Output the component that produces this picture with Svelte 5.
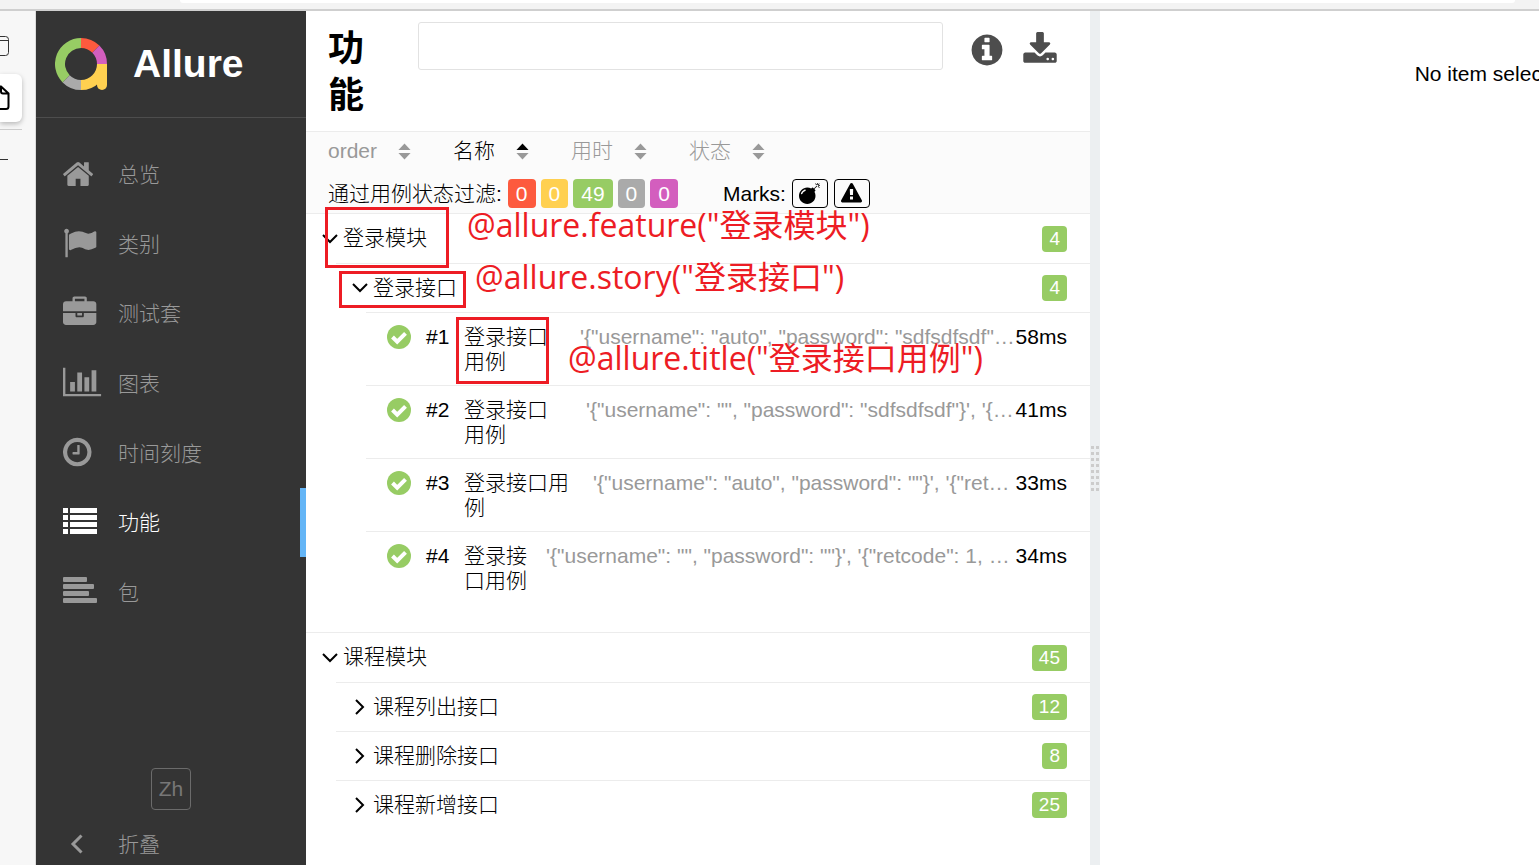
<script>
  const navItems = [
    { id: "overview", label: "总览" },
    { id: "categories", label: "类别" },
    { id: "suites", label: "测试套" },
    { id: "graph", label: "图表" },
    { id: "timeline", label: "时间刻度" },
    { id: "behaviors", label: "功能" },
    { id: "packages", label: "包" },
  ];

  const sorters = [
    { id: "order", label: "order" },
    { id: "name", label: "名称" },
    { id: "duration", label: "用时" },
    { id: "status", label: "状态" },
  ];

  const statuses = [
    { id: "failed", count: 0 },
    { id: "broken", count: 0 },
    { id: "passed", count: 49 },
    { id: "skipped", count: 0 },
    { id: "unknown", count: 0 },
  ];

  const tree = [
    {
      name: "登录模块",
      count: 4,
      stories: [
        {
          name: "登录接口",
          count: 4,
          cases: [
            { order: 1, nameWidth: 98, params: `'{"username": "auto", "password": "sdfsdfsdf"}', '{"retcode": 1}'`, time: "58ms" },
            { order: 2, nameWidth: 104, params: `'{"username": "", "password": "sdfsdfsdf"}', '{"retcode": 1}'`, time: "41ms" },
            { order: 3, nameWidth: 111, params: `'{"username": "auto", "password": ""}', '{"retcode": 1}'`, time: "33ms" },
            { order: 4, nameWidth: 64, params: `'{"username": "", "password": ""}', '{"retcode": 1, "reason": ""}'`, time: "34ms" },
          ],
        },
      ],
    },
    {
      name: "课程模块",
      count: 45,
      stories: [
        { name: "课程列出接口", count: 12, cases: [] },
        { name: "课程删除接口", count: 8, cases: [] },
        { name: "课程新增接口", count: 25, cases: [] },
      ],
    },
  ];

  let activeTab = $state("behaviors");
  let activeSort = $state("name");
  let query = $state("");
</script>

{#snippet chevron(open)}
  <svg class="chevron" viewBox="0 0 16 16" aria-hidden="true">
    <path d={open ? "M1 4l7 7 7-7" : "M4 1l7 7-7 7"} />
  </svg>
{/snippet}

{#snippet navIcon(id)}
  <svg class="nav-icon" viewBox="0 0 40 36" aria-hidden="true">
    {#if id === "overview"}
      <path transform="translate(-1.6 .4) scale(.0186)" d="M1472 992v480q0 26-19 45t-45 19h-384v-384h-256v384h-384q-26 0-45-19t-19-45v-480q0-1 .5-3t.5-3l575-474 575 474q1 2 1 6zm223-69l-62 74q-8 9-21 11h-3q-13 0-21-7l-692-577-692 577q-12 8-24 7-13-2-21-11l-62-74q-8-10-7-23.5t11-21.5l719-599q32-26 76-26t76 26l244 204v-195q0-14 9-23t23-9h192q14 0 23 9t9 23v408l219 182q10 8 11 21.5t-7 23.5z" />
    {:else if id === "categories"}
      <path transform="translate(0 .4) scale(.0186)" d="M320 256q0 72-64 110v1266q0 13-9.5 22.5t-22.5 9.5h-64q-13 0-22.5-9.5t-9.5-22.5v-1266q-64-38-64-110 0-53 37.5-90.5t90.5-37.5 90.5 37.5 37.5 90.5zm1472 64v763q0 25-12.5 38.5t-39.5 27.5q-215 116-369 116-61 0-123.5-22t-108.5-48-115.5-48-142.5-22q-192 0-464 146-17 9-33 9-26 0-45-19t-19-45v-742q0-32 31-55 21-14 79-43 236-120 421-120 107 0 200 29t219 88q38 19 88 19 54 0 117.5-21t110-47 88-47 54.5-21q26 0 45 19t19 45z" />
    {:else if id === "suites"}
      <path transform="translate(0 .4) scale(.0186)" d="M640 256h512v-128h-512v128zm1152 640v480q0 66-47 113t-113 47h-1472q-66 0-113-47t-47-113v-480h672v160q0 26 19 45t45 19h320q26 0 45-19t19-45v-160h672zm-768 0v128h-256v-128h256zm768-480v384h-1792v-384q0-66 47-113t113-47h352v-160q0-40 28-68t68-28h576q40 0 68 28t28 68v160h352q66 0 113 47t47 113z" />
    {:else if id === "graph"}
      <path transform="translate(0 .4) scale(.0186)" d="M640 896v512h-256v-512h256zm384-512v1024h-256v-1024h256zm1024 1152v128h-2048v-1536h128v1408h1920zm-640-896v768h-256v-768h256zm384-384v1152h-256v-1152h256z" />
    {:else if id === "timeline"}
      <path transform="translate(-2.4 .4) scale(.0186)" d="M1024 544v448q0 14-9 23t-23 9h-320q-14 0-23-9t-9-23v-64q0-14 9-23t23-9h224v-352q0-14 9-23t23-9h64q14 0 23 9t9 23zm416 352q0-148-73-273t-198-198-273-73-273 73-198 198-73 273 73 273 198 198 273 73 273-73 198-198 73-273zm224 0q0 209-103 385.5t-279.5 279.5-385.5 103-385.5-103-279.5-279.5-103-385.5 103-385.5 279.5-279.5 385.5-103 385.5 103 279.5 279.5 103 385.5z" />
    {:else if id === "behaviors"}
      <path d="M0 3h5v5H0zM7 3h27v5H7zM0 10h5v5H0zM7 10h27v5H7zM0 17h5v5H0zM7 17h27v5H7zM0 24h5v5H0zM7 24h27v5H7z" />
    {:else}
      <rect x="0" y="3" width="24" height="5" rx="1" />
      <rect x="0" y="10" width="31" height="5" rx="1" />
      <rect x="0" y="17" width="26" height="5" rx="1" />
      <rect x="0" y="24" width="34" height="5" rx="1" />
    {/if}
  </svg>
{/snippet}

<div class="window">
  <div class="toolbar"><div class="address"></div></div>

  <div class="frame">
    <div class="tab-strip">
      <button class="tab" aria-label="Tabs">
        <svg viewBox="0 0 22 48" aria-hidden="true"><path d="M0 14.5h5.500q3 0 3 3v13q0 3-3 3H0M0 18.500h8" /></svg>
      </button>
      <button class="tab current" aria-label="Current page">
        <svg viewBox="0 0 22 48" aria-hidden="true"><path d="M0 12.500h1l7.500 7v13q0 2.500-2.500 2.500H0M1 12.500v5q0 2 2 2h5.500" /></svg>
      </button>
      <button class="tab" aria-label="New tab">
        <svg viewBox="0 0 22 48" aria-hidden="true"><path d="M0 29.500h8" /></svg>
      </button>
    </div>

    <aside class="side">
      <div class="brand">
        <svg class="logo" viewBox="0 0 52 52" aria-hidden="true">
          <g fill="none" stroke-width="10">
            <path stroke="#97cc64" d="M26 5A21 21 0 0 0 11.150 40.850" />
            <path stroke="#fd5a3e" d="M26 5A21 21 0 0 1 40.850 11.150" />
            <path stroke="#d35ebe" d="M40.850 11.150A21 21 0 0 1 47 26" />
            <path stroke="#ffd050" d="M47 26A21 21 0 0 1 26 47" />
            <path stroke="#aaa" d="M26 47A21 21 0 0 1 11.150 40.850" />
          </g>
          <path fill="#ffd050" d="M42 26h10v21a5 5 0 0 1-10 0z" />
        </svg>
        <span>Allure</span>
      </div>

      <nav class="nav">
        {#each navItems as item}
          <a href="#{item.id}" class:active={activeTab === item.id} onclick={() => (activeTab = item.id)}>
            {@render navIcon(item.id)}
            <span>{item.label}</span>
          </a>
        {/each}
      </nav>

      <div class="side-footer">
        <button class="language">Zh</button>
        <button class="collapse">
          <svg viewBox="0 0 28 20" aria-hidden="true"><path d="M18.500 1.500L10 10l8.500 8.500" /></svg>
          <span>折叠</span>
        </button>
      </div>
    </aside>

    <main class="content">
      <header class="pane-header">
        <h1>功能</h1>
        <input type="text" aria-label="Search" bind:value={query} />
        <button class="tool" aria-label="Info">
          <svg viewBox="0 0 1792 1792" aria-hidden="true"><path d="M1152 1376v-160q0-14-9-23t-23-9h-96v-512q0-14-9-23t-23-9h-320q-14 0-23 9t-9 23v160q0 14 9 23t23 9h96v320h-96q-14 0-23 9t-9 23v160q0 14 9 23t23 9h448q14 0 23-9t9-23zm-128-896v-160q0-14-9-23t-23-9h-192q-14 0-23 9t-9 23v160q0 14 9 23t23 9h192q14 0 23-9t9-23zm640 416q0 209-103 385.5t-279.5 279.5-385.5 103-385.5-103-279.5-279.5-103-385.5 103-385.5 279.5-279.5 385.5-103 385.5 103 279.5 279.5 103 385.5z" /></svg>
        </button>
        <button class="tool" aria-label="Download">
          <svg viewBox="0 0 1792 1792" aria-hidden="true"><path d="M1344 1344q0-26-19-45t-45-19-45 19-19 45 19 45 45 19 45-19 19-45zm256 0q0-26-19-45t-45-19-45 19-19 45 19 45 45 19 45-19 19-45zm128-224v320q0 40-28 68t-68 28h-1472q-40 0-68-28t-28-68v-320q0-40 28-68t68-28h465l135 136q58 56 136 56t136-56l136-136h464q40 0 68 28t28 68zm-325-569q17 41-14 70l-448 448q-18 19-45 19t-45-19l-448-448q-31-29-14-70 17-39 59-39h256v-448q0-26 19-45t45-19h256q26 0 45 19t19 45v448h256q42 0 59 39z" /></svg>
        </button>
      </header>

      <div class="controls">
        <div class="sorters">
          {#each sorters as sorter}
            <button class:active={activeSort === sorter.id} onclick={() => (activeSort = sorter.id)}>
              {sorter.label}
              <svg viewBox="0 0 14 18" aria-hidden="true">
                <path class="up" d="M0.500 7.500L7 .5l6.500 7z" />
                <path d="M.5 10.500h13L7 17.500z" />
              </svg>
            </button>
          {/each}
        </div>
        <div class="filters">
          <span>通过用例状态过滤:</span>
          <div class="statuses">
            {#each statuses as status}
              <button class="status {status.id}">{status.count}</button>
            {/each}
          </div>
          <div class="marks">
            <span>Marks:</span>
            <button class="mark" aria-label="Flaky">
              <svg viewBox="0 0 1792 1792" aria-hidden="true"><path d="M571 589q-10-25-34-35t-49 0q-108 44-191 127t-127 191q-10 25 0 49t35 34q13 5 24 5 42 0 60-40 34-84 98.500-148.500t148.500-98.500q25-11 35-35t0-49zm942-356l46 46-244 243 68 68q19 19 19 45.500t-19 45.500l-64 64q89 161 89 343 0 143-55.500 273.500t-150 225-225 150-273.500 55.500-273.500-55.500-225-150-150-225-55.500-273.500 55.500-273.500 150-225 225-150 273.500-55.500q182 0 343 89l64-64q19-19 45.500-19t45.500 19l68 68zm8-56q-10 10-22 10-13 0-23-10l-91-90q-9-10-9-23t9-23q10-9 23-9t23 9l90 91q10 9 10 22.500t-10 22.500zm230 230q-11 9-23 9t-23-9l-90-91q-10-9-10-22.500t10-22.500q9-10 22.500-10t22.500 10l91 90q9 10 9 23t-9 23zm41-183q0 14-9 23t-23 9h-96q-14 0-23-9t-9-23 9-23 23-9h96q14 0 23 9t9 23zm-192-192v96q0 14-9 23t-23 9-23-9-9-23v-96q0-14 9-23t23-9 23 9 9 23zm151 55l-91 90q-10 10-22 10-13 0-23-10-10-9-10-22.500t10-22.500l90-91q10-9 23-9t23 9q9 10 9 23t-9 23z" /></svg>
            </button>
            <button class="mark" aria-label="New failed">
              <svg viewBox="0 0 1792 1792" aria-hidden="true"><path d="M1024 1375v-190q0-14-9.500-23.500t-22.500-9.500h-192q-13 0-22.500 9.500t-9.500 23.500v190q0 14 9.500 23.500t22.500 9.500h192q13 0 22.500-9.500t9.500-23.500zm-2-374l18-459q0-12-10-19-13-11-24-11h-220q-11 0-24 11-10 7-10 21l17 457q0 10 10 16.500t24 6.500h185q14 0 23.500-6.500t10.500-16.500zm-14-934l768 1408q35 63-2 126-17 29-46.500 46t-63.500 17h-1536q-34 0-63.500-17t-46.500-46q-37-63-2-126l768-1408q17-31 47-49t65-18 65 18 47 49z" /></svg>
            </button>
          </div>
        </div>
      </div>

      <ul class="tree">
        {#each tree as feature}
          <li class="feature">
            <button class="group">
              {@render chevron(true)}
              <span class="group-name">{feature.name}</span>
              <span class="count">{feature.count}</span>
            </button>
            <ul>
              {#each feature.stories as story}
                <li class="story">
                  <button class="group">
                    {@render chevron(story.cases.length > 0)}
                    <span class="group-name">{story.name}</span>
                    <span class="count">{story.count}</span>
                  </button>
                  {#if story.cases.length}
                    <ul class="cases">
                      {#each story.cases as test}
                        <li>
                          <a class="case" href="#case-{test.order}">
                            <svg class="passed-icon" viewBox="0 0 24 24" aria-hidden="true">
                              <circle cx="12" cy="12" r="12" />
                              <path d="M5.500 12l4.700 4.700 8.300-8.300" />
                            </svg>
                            <span class="order">#{test.order}</span>
                            <span class="case-name" style="width: {test.nameWidth}px">登录接口用例</span>
                            <span class="params">{test.params}</span>
                            <span>{test.time}</span>
                          </a>
                        </li>
                      {/each}
                    </ul>
                  {/if}
                </li>
              {/each}
            </ul>
          </li>
        {/each}
      </ul>

      <div class="note-box feature-box"></div>
      <div class="note-box story-box"></div>
      <div class="note-box title-box"></div>
      <div class="note feature-note">@allure.feature("登录模块")</div>
      <div class="note story-note">@allure.story("登录接口")</div>
      <div class="note title-note">@allure.title("登录接口用例")</div>
    </main>

    <div class="gutter"><div class="grip"></div></div>

    <section class="detail">
      <p>No item selected</p>
    </section>
  </div>
</div>

<style>
  :global(body) {
    background: #f7f7f7;
  }
  .window {
    display: flex;
    flex-direction: column;
    height: 100vh;
    overflow: hidden;
    color: #000;
    font: 300 21px/25px "Liberation Sans", "Noto Sans CJK SC", sans-serif;
  }
  button {
    padding: 0;
    border: 0;
    background: none;
    color: inherit;
    font: inherit;
    cursor: pointer;
  }
  a {
    color: inherit;
    text-decoration: none;
  }
  ul {
    margin: 0;
    padding: 0;
    list-style: none;
  }
  svg {
    display: block;
    flex-shrink: 0;
    fill: currentColor;
  }

  /* Browser edge */
  .toolbar {
    flex: none;
    height: 9px;
    padding: 0 24px 0 180px;
    border-bottom: 2px solid #cfcfcf;
    background: #f3f3f3;
  }
  .address {
    height: 3px;
    border-radius: 0 0 5px 5px;
    background: #fff;
  }
  .frame {
    display: flex;
    flex: 1;
    min-height: 0;
  }
  .tab-strip {
    flex: none;
    width: 35px;
    padding-top: 11px;
    border-right: 1px solid #dcdcdc;
  }
  .tab {
    display: block;
    width: 22px;
    height: 48px;
  }
  .tab svg {
    width: 22px;
    height: 48px;
    fill: none;
    stroke: #333;
  }
  .tab.current {
    margin: 4px 0 7px;
    border-radius: 0 6px 6px 0;
    background: #fff;
    box-shadow: 0 2px 5px rgba(0, 0, 0, 0.25);
  }
  .tab.current svg {
    stroke: #000;
    stroke-width: 2;
  }
  .tab:last-child {
    border-top: 1px solid #ccc;
  }

  /* Side navigation */
  .side {
    display: flex;
    flex: none;
    flex-direction: column;
    width: 270px;
    background: #343434;
    color: #999;
  }
  .brand {
    display: flex;
    align-items: center;
    gap: 26px;
    height: 106px;
    padding-left: 19px;
    border-bottom: 1px solid #4d4d4d;
    color: #fff;
    font-size: 39px;
    font-weight: 700;
    line-height: 48px;
  }
  .logo {
    width: 52px;
    height: 52px;
  }
  .nav {
    display: grid;
    grid-auto-rows: 1fr;
    height: 487px;
    margin-top: 22px;
  }
  .nav a {
    display: flex;
    align-items: center;
    gap: 15px;
    padding-left: 27px;
    border-right: 6px solid transparent;
  }
  .nav a.active {
    border-color: #64b5f6;
    color: #fff;
  }
  .nav-icon {
    width: 40px;
    height: 36px;
  }
  .side-footer {
    display: flex;
    flex-direction: column;
    gap: 13px;
    margin-top: auto;
  }
  .language {
    align-self: center;
    width: 40px;
    height: 42px;
    padding-bottom: 2px;
    border: 1px solid #6b6b6b;
    border-radius: 4px;
    color: #777;
  }
  .collapse {
    display: flex;
    align-items: center;
    gap: 27px;
    height: 42px;
    padding-left: 27px;
  }
  .collapse svg {
    width: 28px;
    height: 20px;
    fill: none;
    stroke: currentColor;
    stroke-width: 3;
  }

  /* Behaviors pane */
  .content {
    position: relative;
    flex: 25 25 0;
    min-width: 0;
    background: #fff;
  }
  .pane-header {
    display: flex;
    align-items: flex-start;
    height: 120px;
    box-sizing: border-box;
    padding: 11px 32px 0 22px;
  }
  h1 {
    width: 36px;
    margin: 3px 54px 0 0;
    font-size: 36px;
    line-height: 47px;
    font-weight: 700;
  }
  .pane-header input {
    flex: 1;
    min-width: 0;
    height: 48px;
    box-sizing: border-box;
    margin-right: 9px;
    padding: 0 12px;
    border: 1px solid #e2e2e2;
    border-radius: 3px;
    font: inherit;
  }
  .tool {
    margin: 10px 0 0 17px;
    color: #4d4d4d;
  }
  .tool svg {
    width: 36px;
    height: 36px;
  }
  .controls {
    padding: 6px 22px 5px;
    border: 1px solid #ececec;
    border-width: 1px 0;
    background: #fbfbfb;
  }
  .sorters {
    display: flex;
    gap: 42px;
    margin-bottom: 16px;
  }
  .sorters button {
    display: flex;
    align-items: center;
    gap: 21px;
    color: #999;
  }
  .sorters svg {
    width: 13px;
    height: 17px;
    margin-top: 2px;
  }
  .sorters .active {
    color: #000;
  }
  .sorters .active path:not(.up) {
    fill: #999;
  }
  .filters,
  .marks {
    display: flex;
    align-items: center;
    gap: 6px;
    height: 29px;
  }
  .statuses {
    display: flex;
    gap: 5px;
  }
  .marks {
    margin-left: 39px;
  }
  .status,
  .count {
    border-radius: 4px;
    background: #97cc64;
    color: #fff;
  }
  .status {
    height: 29px;
    padding: 0 8px;
  }
  .failed { background: #fd5a3e; }
  .broken { background: #ffd050; }
  .skipped { background: #aaa; }
  .unknown { background: #d35ebe; }
  .mark {
    display: flex;
    align-items: center;
    justify-content: center;
    width: 36px;
    height: 29px;
    border: 1px solid #000;
    border-radius: 4px;
  }
  .mark svg {
    width: 21px;
    height: 21px;
  }

  /* Tree */
  .feature + .feature {
    border-top: 1px solid #ececec;
  }
  .group {
    display: flex;
    align-items: center;
    width: 100%;
    height: 49px;
    padding: 0 23px 0 16px;
    text-align: left;
  }
  .chevron {
    width: 16px;
    height: 16px;
    margin-right: 5px;
    fill: none;
    stroke: currentColor;
    stroke-width: 2;
  }
  .group-name {
    flex: 1;
    padding-bottom: 2px;
  }
  .count {
    padding: 0 7px;
    font-size: 19px;
    line-height: 26px;
  }
  .story {
    margin-left: 30px;
    border-top: 1px solid #ececec;
  }
  .story .group {
    height: 48px;
  }
  .cases {
    margin: 0 0 28px 30px;
  }
  .case {
    display: flex;
    align-items: flex-start;
    height: 61px;
    padding: 11px 23px 0 21px;
    border-top: 1px solid #ececec;
  }
  .passed-icon {
    width: 24px;
    height: 24px;
    margin: 1px 15px 0 0;
    fill: #97cc64;
  }
  .passed-icon path {
    fill: none;
    stroke: #fff;
    stroke-width: 4;
  }
  .order {
    flex: none;
    width: 38px;
  }
  .case-name {
    flex: none;
    margin-right: 18px;
  }
  .params {
    flex: 1;
    min-width: 0;
    overflow: hidden;
    color: #999;
    text-overflow: ellipsis;
    white-space: nowrap;
  }

  /* Annotations over the tree */
  .note-box {
    position: absolute;
    box-sizing: border-box;
    border: 3px solid #ed1c24;
    pointer-events: none;
  }
  .feature-box { left: 19px; top: 196px; width: 124px; height: 61px; }
  .story-box { left: 33px; top: 260px; width: 127px; height: 37px; }
  .title-box { left: 150px; top: 306px; width: 93px; height: 67px; }
  .note {
    position: absolute;
    color: #ed1c24;
    font: 400 32px/40px "Open Sans", "Noto Sans CJK SC", sans-serif;
    white-space: nowrap;
    pointer-events: none;
  }
  .feature-note { left: 161px; top: 194px; }
  .story-note { left: 169px; top: 246px; }
  .title-note { left: 262px; top: 327px; }

  .gutter {
    display: flex;
    flex: none;
    align-items: center;
    justify-content: center;
    width: 10px;
    box-sizing: border-box;
    padding-top: 61px;
    background: #eceff1;
  }
  .grip {
    width: 8px;
    height: 45px;
    background:
      repeating-linear-gradient(transparent 0 3px, #eceff1 3px 6px),
      linear-gradient(90deg, #ccc 3px, transparent 3px 5px, #ccc 5px);
  }
  .detail {
    flex: 14 14 0;
    min-width: 0;
    overflow: hidden;
    background: #fff;
  }
  .detail p {
    width: 179%;
    margin: 50px 0 0;
    text-align: center;
  }
</style>
